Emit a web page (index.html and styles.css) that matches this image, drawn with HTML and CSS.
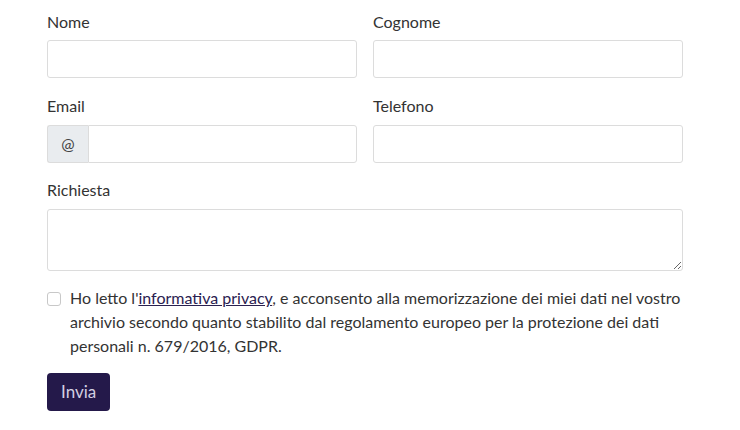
FILE: index.html
```html
<!DOCTYPE html>
<html lang="it">
<head>
<meta charset="utf-8">
<link rel="stylesheet" href="styles.css">
</head>
<body>
<form class="form">
  <div class="row first">
    <div class="field">
      <label class="label">Nome</label>
      <input class="input" type="text">
    </div>
    <div class="field">
      <label class="label">Cognome</label>
      <input class="input" type="text">
    </div>
  </div>
  <div class="row">
    <div class="field">
      <label class="label">Email</label>
      <div class="group">
        <span class="group-text">@</span>
        <input class="input group-input" type="text">
      </div>
    </div>
    <div class="field">
      <label class="label">Telefono</label>
      <input class="input" type="text">
    </div>
  </div>
  <div class="row single">
    <div class="field">
      <label class="label">Richiesta</label>
      <textarea class="input textarea" rows="2"></textarea>
    </div>
  </div>
  <div class="check">
    <span class="check-box"></span>
    <p class="check-label">Ho letto l'<a class="link" href="#">informativa privacy</a>, e acconsento alla memorizzazione dei miei dati nel vostro archivio secondo quanto stabilito dal regolamento europeo per la protezione dei dati personali n. 679/2016, GDPR.</p>
  </div>
  <button class="btn" type="button">Invia</button>
</form>
</body>
</html>
```
FILE: styles.css
```css
* { box-sizing: border-box; }
body {
  margin: 0;
  background: #fff;
  font-family: Lato, "Noto Sans", sans-serif;
  font-size: 16px;
  line-height: 24px;
  color: #333333;
}
.form {
  width: 636px;
  margin: 10px 0 0 47px;
  display: flex;
  flex-direction: column;
}
.row {
  display: grid;
  grid-template-columns: 1fr 1fr;
  column-gap: 16px;
  margin-bottom: 15px;
}
.row.first { margin-bottom: 16px; }
.row.first .label { margin-bottom: 6px; }
.row.single { grid-template-columns: 1fr; margin-bottom: 15px; }
.field { display: flex; flex-direction: column; }
.label { display: block; margin-bottom: 7px; }
.input {
  display: block;
  width: 100%;
  height: 38px;
  border: 1px solid #dcdcdc;
  border-radius: 3px;
  background: #fff;
  font: inherit;
  padding: 6px 12px;
}
.textarea { height: 62px; resize: vertical; }
.group { display: flex; }
.group-text {
  width: 41px;
  height: 38px;
  display: flex;
  align-items: center;
  justify-content: center;
  background: #e9ecef;
  border: 1px solid #dcdcdc;
  border-right: none;
  border-radius: 3px 0 0 3px;
  color: #444;
}
.group-input { flex: 1; border-radius: 0 3px 3px 0; }
.check { display: flex; align-items: flex-start; }
.check-box {
  flex: none;
  width: 14px;
  height: 14px;
  margin-top: 6px;
  border: 1px solid #c8c8c8;
  border-radius: 3px;
  background: #fff;
}
.check-label { margin: 0 0 15px 9px; }
.link { color: #2a2150; text-decoration: underline; }
.btn {
  align-self: flex-start;
  height: 38px;
  padding: 0 14px;
  border: none;
  border-radius: 4px;
  background: #24194a;
  color: #d3cfe2;
  font: inherit;
  font-size: 17px;
}
```
